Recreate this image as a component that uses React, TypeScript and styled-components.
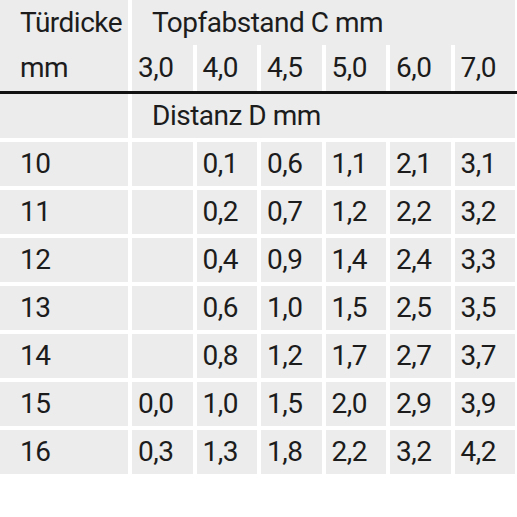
import { createGlobalStyle, styled } from 'styled-components'

const GlobalStyle = createGlobalStyle`
	html, body {
		margin: 0;
		padding: 0;
		background: #ffffff;
	}
	body {
		font-family: Roboto, 'Liberation Sans', sans-serif;
		color: #1c1c1c;
	}
`

const columns = ['3,0', '4,0', '4,5', '5,0', '6,0', '7,0']

const rows: { thickness: string; values: string[] }[] = [
	{ thickness: '10', values: ['', '0,1', '0,6', '1,1', '2,1', '3,1'] },
	{ thickness: '11', values: ['', '0,2', '0,7', '1,2', '2,2', '3,2'] },
	{ thickness: '12', values: ['', '0,4', '0,9', '1,4', '2,4', '3,3'] },
	{ thickness: '13', values: ['', '0,6', '1,0', '1,5', '2,5', '3,5'] },
	{ thickness: '14', values: ['', '0,8', '1,2', '1,7', '2,7', '3,7'] },
	{ thickness: '15', values: ['0,0', '1,0', '1,5', '2,0', '2,9', '3,9'] },
	{ thickness: '16', values: ['0,3', '1,3', '1,8', '2,2', '3,2', '4,2'] },
]

export default function App() {
	return (
		<>
			<GlobalStyle />
			<Table>
				<Header>
					<LabelCell $rowSpan={2}>
						<Line>Türdicke</Line>
						<Line>mm</Line>
					</LabelCell>
					<SpanCell>Topfabstand C mm</SpanCell>
					{columns.map((c) => (
						<Cell key={c}>{c}</Cell>
					))}
				</Header>
				<Rule />
				<Body>
					<LabelCell />
					<SpanCell>Distanz D mm</SpanCell>
					{rows.map((r) => (
						<Row key={r.thickness} row={r} />
					))}
				</Body>
			</Table>
		</>
	)
}

function Row({ row }: { row: { thickness: string; values: string[] } }) {
	return (
		<>
			<LabelCell>{row.thickness}</LabelCell>
			{row.values.map((v, i) => (
				<Cell key={i}>{v}</Cell>
			))}
		</>
	)
}

const Table = styled.div`
	width: 517px;
	font-size: 28px;
	line-height: 1;
	letter-spacing: -0.5px;
`

const gridColumns = `128px repeat(6, 60.5px)`

const Header = styled.div`
	display: grid;
	grid-template-columns: ${gridColumns};
	grid-template-rows: 45px 46px;
	column-gap: 4px;
`

const Body = styled.div`
	display: grid;
	grid-template-columns: ${gridColumns};
	grid-auto-rows: 44px;
	column-gap: 4px;
	row-gap: 4px;
`

const Rule = styled.div`
	height: 3px;
	background: #111111;
`

const Cell = styled.div`
	background: #ececec;
	display: flex;
	align-items: center;
	padding-left: 6px;
	white-space: nowrap;
`

const LabelCell = styled(Cell)<{ $rowSpan?: number }>`
	grid-row: span ${({ $rowSpan }) => $rowSpan ?? 1};
	padding-left: 20px;
	flex-direction: column;
	align-items: flex-start;
	justify-content: space-around;
`

const Line = styled.span`
	display: block;
`

const SpanCell = styled(Cell)`
	grid-column: span 6;
	padding-left: 20px;
`
